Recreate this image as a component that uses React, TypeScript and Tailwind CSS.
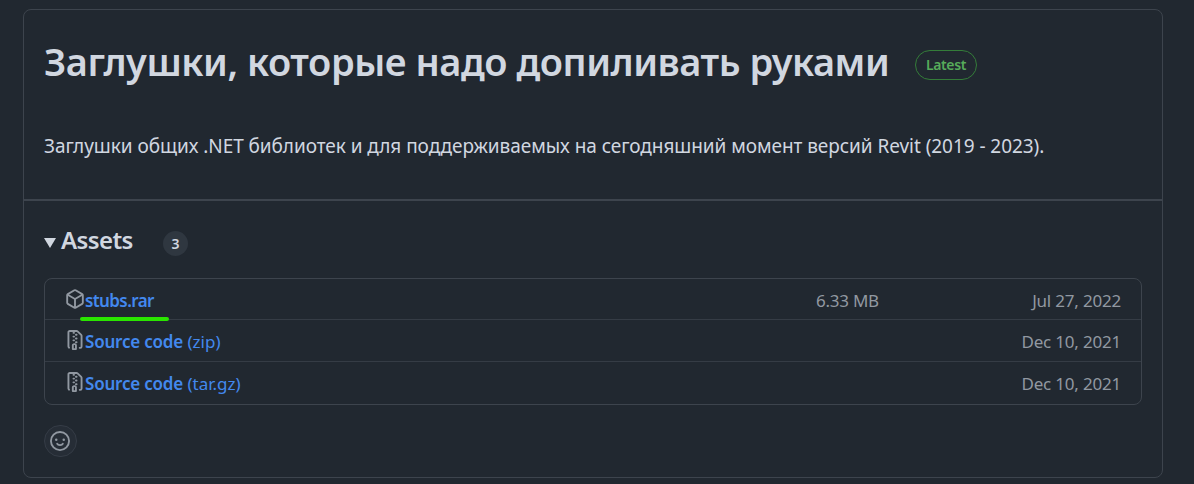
const rows = [
  { name: "stubs.rar", ext: "", size: "6.33 MB", date: "Jul 27, 2022", height: "h-[41px] pt-[2px]", nameTracking: "tracking-[-0.6px]" },
  { name: "Source code", ext: "(zip)", size: "", date: "Dec 10, 2021", height: "h-[42px] pt-[2px]", nameTracking: "tracking-[-0.2px]" },
  { name: "Source code", ext: "(tar.gz)", size: "", date: "Dec 10, 2021", height: "h-[42px]", nameTracking: "tracking-[-0.2px]" },
];

function PackageIcon() {
  return (
    <svg className="-mt-[2px] h-5 w-5 shrink-0" viewBox="0 0 16 16" fill="currentColor">
      <path d="m8.878.392 5.25 3.045c.54.314.872.89.872 1.514v6.098a1.75 1.75 0 0 1-.872 1.514l-5.25 3.045a1.75 1.75 0 0 1-1.756 0l-5.25-3.045A1.75 1.75 0 0 1 1 11.049V4.951c0-.624.332-1.201.872-1.514L7.122.392a1.75 1.75 0 0 1 1.756 0ZM7.875 1.69l-4.63 2.685L8 7.133l4.755-2.758-4.63-2.685a.248.248 0 0 0-.25 0ZM2.5 5.677v5.372c0 .09.047.171.125.216l4.625 2.683V8.432Zm6.25 8.271 4.625-2.683a.25.25 0 0 0 .125-.216V5.677L8.75 8.432Z" />
    </svg>
  );
}

function ZipIcon() {
  return (
    <svg className="-mt-[3px] h-5 w-5 shrink-0" viewBox="0 0 16 16" fill="currentColor">
      <path d="M3.5 1.75v11.5c0 .09.048.173.126.217a.75.75 0 0 1-.752 1.298A1.748 1.748 0 0 1 2 13.25V1.75C2 .784 2.784 0 3.75 0h5.586c.464 0 .909.185 1.237.513l2.914 2.914c.329.328.513.773.513 1.237v8.586A1.75 1.75 0 0 1 12.25 15h-.5a.75.75 0 0 1 0-1.5h.5a.25.25 0 0 0 .25-.25V4.664a.25.25 0 0 0-.073-.177L9.513 1.573a.25.25 0 0 0-.177-.073H7.25a.75.75 0 0 1 0 1.5h-.5a.75.75 0 0 1 0-1.5h-3a.25.25 0 0 0-.25.25Zm3.75 8.75h.5c.966 0 1.75.784 1.75 1.75v3a.75.75 0 0 1-.75.75h-2.5a.75.75 0 0 1-.75-.75v-3c0-.966.784-1.75 1.75-1.75ZM6 5.25a.75.75 0 0 1 .75-.75h.5a.75.75 0 0 1 0 1.5h-.5A.75.75 0 0 1 6 5.25Zm.75 2.25h.5a.75.75 0 0 1 0 1.5h-.5a.75.75 0 0 1 0-1.5ZM8 6.75A.75.75 0 0 1 8.75 6h.5a.75.75 0 0 1 0 1.5h-.5A.75.75 0 0 1 8 6.75ZM8.75 3h.5a.75.75 0 0 1 0 1.5h-.5a.75.75 0 0 1 0-1.5ZM8 9.75A.75.75 0 0 1 8.75 9h.5a.75.75 0 0 1 0 1.5h-.5A.75.75 0 0 1 8 9.75Zm-1 2.5v2.25h1v-2.25a.25.25 0 0 0-.25-.25h-.5a.25.25 0 0 0-.25.25Z" />
    </svg>
  );
}

export default function App() {
  return (
    <div className="h-[484px] overflow-hidden bg-[#212830] pl-[23px] pt-[9px] font-['Noto_Sans',sans-serif] text-[#d1d7e0]">
      <div className="h-[469px] w-[1140px] rounded-[8px] border border-[#3d444d]">
        <div className="h-[191px] border-b-2 border-[#3d444d] px-5">
          <div className="flex items-center pt-[29px]">
            <h1 className="-mt-[2px] h-[54px] w-[871px] whitespace-nowrap text-[38px] font-semibold leading-[48px] tracking-[-0.46px]">Заглушки, которые надо допиливать руками</h1>
            <span className="flex h-[30px] w-[62px] items-center justify-center rounded-full border border-[#347d39] pb-px text-[14px] font-semibold tracking-[-0.4px] text-[#57ab5a]">Latest</span>
          </div>
          <p className="mt-[41px] whitespace-nowrap text-[19px] leading-[28px] tracking-[-0.055px]">Заглушки общих .NET библиотек и для поддерживаемых на сегодняшний момент версий Revit (2019 - 2023).</p>
        </div>
        <div className="px-5 pt-[24px]">
          <div className="flex h-[32px] items-center">
            <svg className="mt-[3px] h-[10px] w-3" viewBox="0 0 12 10" fill="currentColor"><path d="M0 0h12L6 10z" /></svg>
            <h2 className="-mt-[2px] ml-[5px] w-[102px] text-[24px] font-semibold leading-8 tracking-[-0.6px]">Assets</h2>
            <span className="mt-[4px] flex h-[25px] w-[25px] items-center justify-center rounded-full bg-[#2f3740] text-[14px] font-semibold">3</span>
          </div>
          <ul className="mt-[21px] rounded-[8px] border border-[#3d444d] text-[17px] text-[#9198a1]">
            {rows.map((r, i) => (
              <li key={r.name + r.ext} className={`flex items-center border-b border-[#353c45] pl-5 pr-5 last:border-b-0 ${r.height}`}>
                {i === 0 ? <PackageIcon /> : <ZipIcon />}
                <span className="relative flex-1 pt-px text-[#4388ee]">
                  <b className={`font-semibold ${r.nameTracking}`}>{r.name}</b> {r.ext}
                  {i === 0 && <i className="absolute -left-[5px] top-[30px] h-1 w-[89px] rounded-full bg-[#2ae500]" />}
                </span>
                <span className="w-[63px] whitespace-nowrap pt-px tracking-[-0.25px]">{r.size}</span>
                <span className="w-[242px] pt-px text-right tracking-[-0.2px]">{r.date}</span>
              </li>
            ))}
          </ul>
          <div className="mt-[20px] flex h-8 w-[33px] items-center justify-center rounded-full border border-[#353c46] bg-[#262d36] text-[#9198a1]">
            <svg className="-ml-px h-5 w-5" viewBox="0 0 16 16" fill="currentColor"><path d="M8 0a8 8 0 1 1 0 16A8 8 0 0 1 8 0ZM1.5 8a6.5 6.5 0 1 0 13 0 6.5 6.5 0 0 0-13 0Zm3.82 1.636a.75.75 0 0 1 1.038.175l.007.009c.103.118.22.222.35.31.264.178.683.37 1.285.37.602 0 1.02-.192 1.285-.371.13-.088.247-.192.35-.31l.007-.008a.75.75 0 0 1 1.222.87c-.022.03-.182.239-.728.69C9.627 11.8 8.917 12 8 12s-1.627-.3-2.136-.63c-.4-.26-.73-.68-.728-.69a.75.75 0 0 1 .184-1.044ZM12 7a1 1 0 1 1-2 0 1 1 0 0 1 2 0ZM5 8a1 1 0 1 1 0-2 1 1 0 0 1 0 2Z" /></svg>
          </div>
        </div>
      </div>
    </div>
  );
}
